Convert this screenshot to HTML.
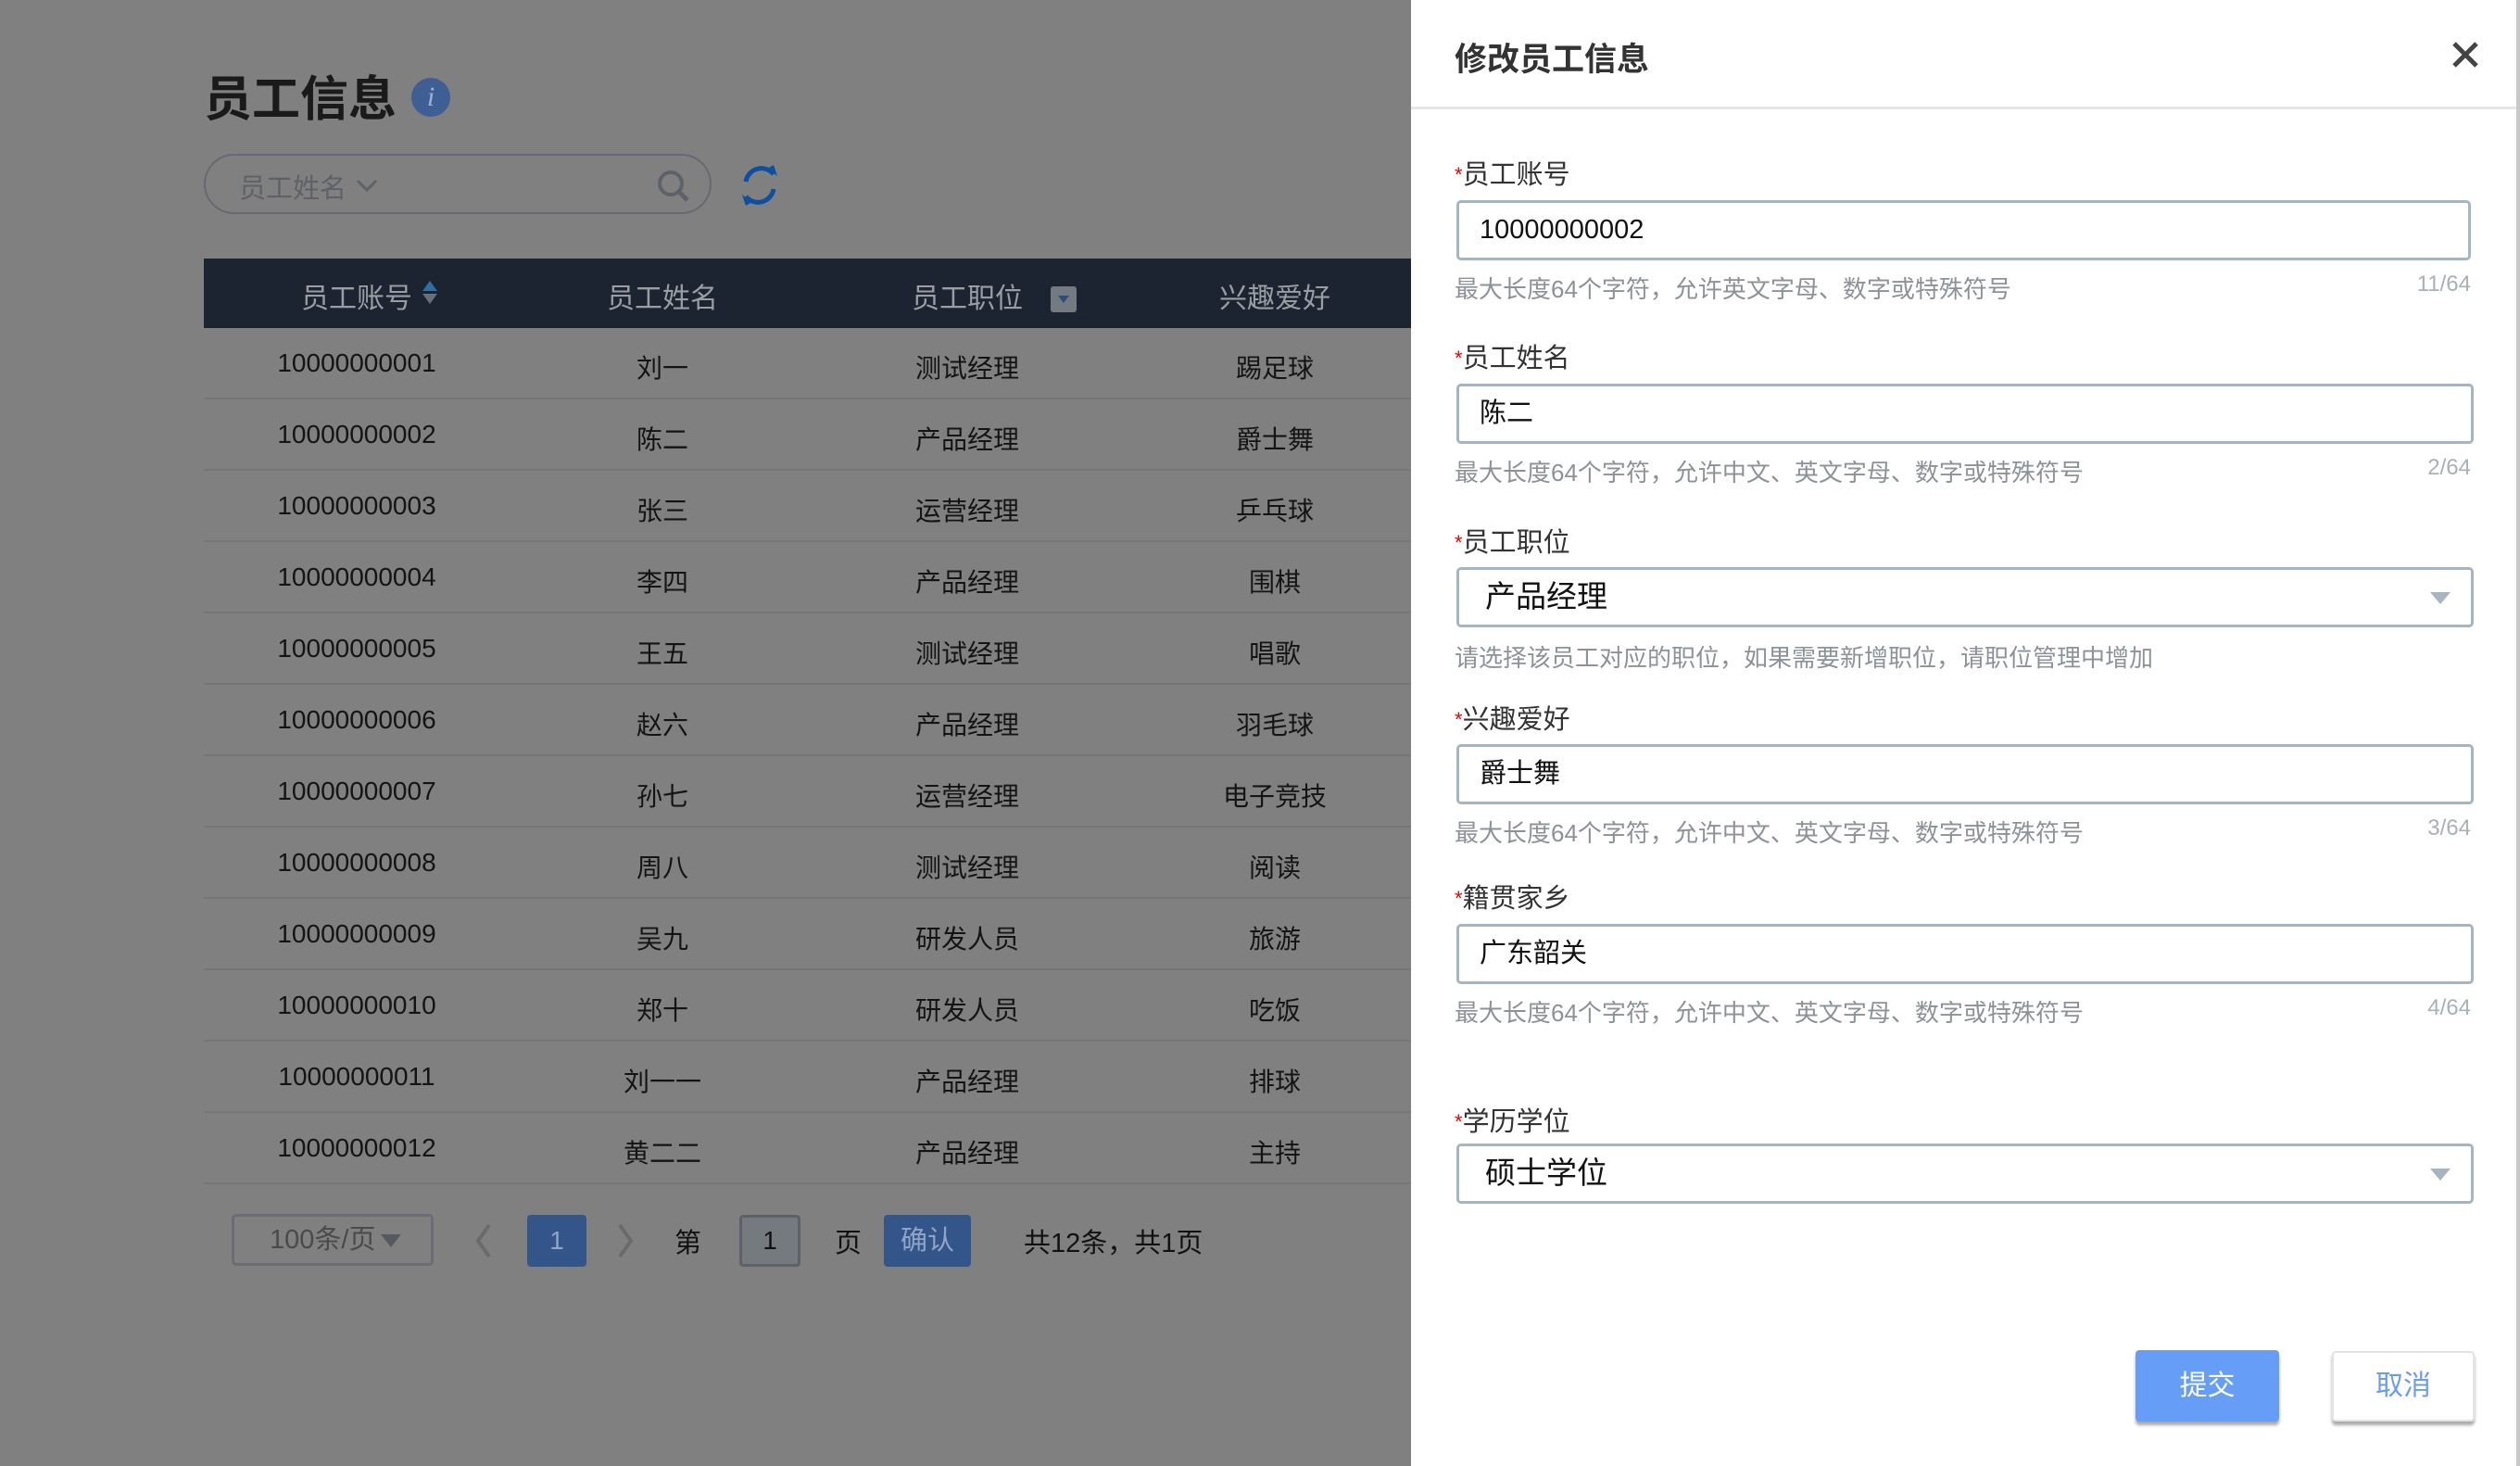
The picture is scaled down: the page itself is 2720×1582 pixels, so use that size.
<!DOCTYPE html>
<html><head><meta charset="utf-8"><style>
*{margin:0;padding:0;box-sizing:border-box}
body{width:2720px;height:1582px;background:#808080;position:relative;overflow:hidden;font-family:"Liberation Sans","Noto Sans CJK SC",sans-serif;color:#111}
.a{position:absolute}
.title{left:220px;top:74px;font-size:52px;font-weight:bold;color:#1a1a1a;line-height:68px}
.info{left:444px;top:84px;width:42px;height:42px;border-radius:50%;background:#3f5e93;color:#9fb2d2;font:italic 30px "Liberation Serif",serif;text-align:center;line-height:42px}
.search{left:220px;top:166px;width:548px;height:65px;border:2px solid #666a70;border-radius:33px}
.search span{position:absolute;left:36px;top:12px;font-size:29px;color:#5e6268}
.thead{left:220px;top:279px;width:1303px;height:75px;background:#1b2430}
.th{position:absolute;top:18px;font-size:30px;color:#9a9ea4;transform:translateX(-50%);white-space:nowrap}
.row{position:absolute;left:220px;width:1303px;height:77px;border-bottom:2px solid #767676}
.td{position:absolute;top:22px;font-size:28px;color:#141414;transform:translateX(-50%);white-space:nowrap}
.drawer{left:1523px;top:0;width:1197px;height:1582px;background:#fff}
.dh{left:0;top:0;width:1197px;height:118px;border-bottom:3px solid #e6e6e6}
.lbl{position:absolute;left:47px;font-size:29px;color:#333;line-height:36px}
.lbl b{color:#e00;font-weight:normal;font-size:22px;vertical-align:top}
.inp{position:absolute;left:49px;width:1095px;height:65px;border:3px solid #a7b4c2;border-radius:5px;font-size:29px;color:#111;padding-left:22px;line-height:58px}
.sel{font-size:33px;padding-left:28px}
.sel i{position:absolute;right:22px;top:24px;width:0;height:0;border-left:11px solid transparent;border-right:11px solid transparent;border-top:13px solid #a7b4c2}
.hint{position:absolute;left:47px;font-size:26px;color:#8d9299;line-height:32px}
.cnt{position:absolute;right:53px;font-size:24px;color:#aab0b8}
</style></head><body>
<div class="a title">员工信息</div>
<div class="a info">i</div>
<div class="a search"><span>员工姓名</span>
<svg class="a" style="left:162px;top:24px" width="24" height="16" viewBox="0 0 24 16"><path d="M2 3L12 13L22 3" fill="none" stroke="#5e6268" stroke-width="3"/></svg>
<svg class="a" style="left:486px;top:14px" width="38" height="38" viewBox="0 0 38 38"><circle cx="16" cy="16" r="12" fill="none" stroke="#5e6268" stroke-width="4"/><path d="M25 25L34 34" stroke="#5e6268" stroke-width="5"/></svg></div>
<svg class="a" style="left:795px;top:174px" width="50" height="52" viewBox="0 0 50 52"><path d="M10 22A17 17 0 0 1 40 14" fill="none" stroke="#0d4fa0" stroke-width="5"/><path d="M33 8L44 16L40 4Z" fill="#0d4fa0"/><path d="M40 30A17 17 0 0 1 10 38" fill="none" stroke="#0d4fa0" stroke-width="5"/><path d="M17 44L6 36L10 48Z" fill="#0d4fa0"/></svg>
<div class="a thead">
<div class="th" style="left:165px">员工账号</div>
<div class="a" style="left:236px;top:24px;border-left:8px solid transparent;border-right:8px solid transparent;border-bottom:11px solid #2f6ea8"></div>
<div class="a" style="left:236px;top:38px;border-left:8px solid transparent;border-right:8px solid transparent;border-top:11px solid #6a7078"></div>
<div class="th" style="left:495px">员工姓名</div>
<div class="th" style="left:824px">员工职位</div>
<div class="a" style="left:914px;top:30px;width:28px;height:28px;background:#747a82;border-radius:3px"><div class="a" style="left:8px;top:10px;border-left:6px solid transparent;border-right:6px solid transparent;border-top:8px solid #2b4e78"></div></div>
<div class="th" style="left:1156px">兴趣爱好</div>
</div>
<div class="a" style="left:0;top:354px">
<div class="row" style="top:0"><div class="td" style="left:165px">10000000001</div><div class="td" style="left:495px">刘一</div><div class="td" style="left:824px">测试经理</div><div class="td" style="left:1156px">踢足球</div></div>
<div class="row" style="top:77px"><div class="td" style="left:165px">10000000002</div><div class="td" style="left:495px">陈二</div><div class="td" style="left:824px">产品经理</div><div class="td" style="left:1156px">爵士舞</div></div>
<div class="row" style="top:154px"><div class="td" style="left:165px">10000000003</div><div class="td" style="left:495px">张三</div><div class="td" style="left:824px">运营经理</div><div class="td" style="left:1156px">乒乓球</div></div>
<div class="row" style="top:231px"><div class="td" style="left:165px">10000000004</div><div class="td" style="left:495px">李四</div><div class="td" style="left:824px">产品经理</div><div class="td" style="left:1156px">围棋</div></div>
<div class="row" style="top:308px"><div class="td" style="left:165px">10000000005</div><div class="td" style="left:495px">王五</div><div class="td" style="left:824px">测试经理</div><div class="td" style="left:1156px">唱歌</div></div>
<div class="row" style="top:385px"><div class="td" style="left:165px">10000000006</div><div class="td" style="left:495px">赵六</div><div class="td" style="left:824px">产品经理</div><div class="td" style="left:1156px">羽毛球</div></div>
<div class="row" style="top:462px"><div class="td" style="left:165px">10000000007</div><div class="td" style="left:495px">孙七</div><div class="td" style="left:824px">运营经理</div><div class="td" style="left:1156px">电子竞技</div></div>
<div class="row" style="top:539px"><div class="td" style="left:165px">10000000008</div><div class="td" style="left:495px">周八</div><div class="td" style="left:824px">测试经理</div><div class="td" style="left:1156px">阅读</div></div>
<div class="row" style="top:616px"><div class="td" style="left:165px">10000000009</div><div class="td" style="left:495px">吴九</div><div class="td" style="left:824px">研发人员</div><div class="td" style="left:1156px">旅游</div></div>
<div class="row" style="top:693px"><div class="td" style="left:165px">10000000010</div><div class="td" style="left:495px">郑十</div><div class="td" style="left:824px">研发人员</div><div class="td" style="left:1156px">吃饭</div></div>
<div class="row" style="top:770px"><div class="td" style="left:165px">10000000011</div><div class="td" style="left:495px">刘一一</div><div class="td" style="left:824px">产品经理</div><div class="td" style="left:1156px">排球</div></div>
<div class="row" style="top:847px"><div class="td" style="left:165px">10000000012</div><div class="td" style="left:495px">黄二二</div><div class="td" style="left:824px">产品经理</div><div class="td" style="left:1156px">主持</div></div>
</div>
<!-- pagination -->
<div class="a" style="left:250px;top:1310px;width:218px;height:56px;border:3px solid #6a6e74;border-radius:5px;font-size:29px;color:#4a4a4a;line-height:50px;padding-left:38px">100条/页<span style="display:inline-block;margin-left:6px;border-left:11px solid transparent;border-right:11px solid transparent;border-top:14px solid #555a62;vertical-align:middle"></span></div>
<svg class="a" style="left:512px;top:1320px" width="20" height="38" viewBox="0 0 20 38"><path d="M16 2L4 19L16 36" fill="none" stroke="#6a6a6a" stroke-width="4"/></svg>
<div class="a" style="left:569px;top:1311px;width:64px;height:56px;background:#34558a;border-radius:4px;color:#8fa4c6;font-size:28px;text-align:center;line-height:56px">1</div>
<svg class="a" style="left:665px;top:1320px" width="20" height="38" viewBox="0 0 20 38"><path d="M4 2L16 19L4 36" fill="none" stroke="#6a6a6a" stroke-width="4"/></svg>
<div class="a" style="left:728px;top:1318px;font-size:29px;color:#111">第</div>
<div class="a" style="left:798px;top:1311px;width:66px;height:56px;border:3px solid #5e6268;background:#757a7f;border-radius:4px;font-size:28px;text-align:center;line-height:50px">1</div>
<div class="a" style="left:901px;top:1318px;font-size:29px;color:#111">页</div>
<div class="a" style="left:954px;top:1311px;width:94px;height:56px;background:#34558a;border-radius:4px;color:#8fa4c6;font-size:29px;text-align:center;line-height:56px">确认</div>
<div class="a" style="left:1105px;top:1318px;font-size:29px;color:#111">共12条，共1页</div>

<div class="a drawer">
<div class="a dh"></div>
<div class="a" style="left:47px;top:36px;font-size:35px;font-weight:bold;color:#333">修改员工信息</div>
<svg class="a" style="left:1123px;top:44px" width="30" height="30" viewBox="0 0 30 30"><path d="M3 3L27 27M27 3L3 27" stroke="#444" stroke-width="5"/></svg>

<div class="lbl" style="top:171px"><b>*</b>员工账号</div>
<div class="inp" style="top:216px">10000000002</div>
<div class="hint" style="top:296px">最大长度64个字符，允许英文字母、数字或特殊符号</div><div class="cnt" style="top:293px">11/64</div>

<div class="lbl" style="top:369px"><b>*</b>员工姓名</div>
<div class="inp" style="top:414px;width:1098px">陈二</div>
<div class="hint" style="top:494px">最大长度64个字符，允许中文、英文字母、数字或特殊符号</div><div class="cnt" style="top:491px">2/64</div>

<div class="lbl" style="top:568px"><b>*</b>员工职位</div>
<div class="inp sel" style="top:612px;width:1098px">产品经理<i></i></div>
<div class="hint" style="top:694px">请选择该员工对应的职位，如果需要新增职位，请职位管理中增加</div>

<div class="lbl" style="top:759px"><b>*</b>兴趣爱好</div>
<div class="inp" style="top:803px;width:1098px">爵士舞</div>
<div class="hint" style="top:883px">最大长度64个字符，允许中文、英文字母、数字或特殊符号</div><div class="cnt" style="top:880px">3/64</div>

<div class="lbl" style="top:952px"><b>*</b>籍贯家乡</div>
<div class="inp" style="top:997px;width:1098px">广东韶关</div>
<div class="hint" style="top:1077px">最大长度64个字符，允许中文、英文字母、数字或特殊符号</div><div class="cnt" style="top:1074px">4/64</div>

<div class="lbl" style="top:1193px"><b>*</b>学历学位</div>
<div class="inp sel" style="top:1234px;width:1098px">硕士学位<i></i></div>

<div class="a" style="left:782px;top:1457px;width:155px;height:77px;background:#669df6;border-radius:4px;box-shadow:0 4px 3px #aaa;color:#fff;font-size:30px;text-align:center;line-height:77px">提交</div>
<div class="a" style="left:994px;top:1458px;width:154px;height:76px;background:#fff;border:2px solid #e2e4e8;border-radius:4px;box-shadow:0 4px 3px #aaa;color:#6b9cf0;font-size:30px;text-align:center;line-height:72px">取消</div>
</div>
<div class="a" style="left:2716px;top:0;width:4px;height:1582px;background:#c8c8c8"></div>
</body></html>
